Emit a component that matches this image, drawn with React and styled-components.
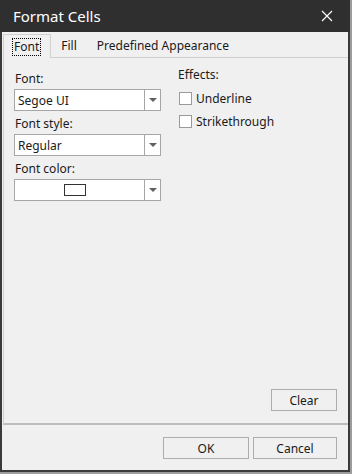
import React, { useState } from 'react';
import styled, { createGlobalStyle } from 'styled-components';

const GlobalStyle = createGlobalStyle`
  html, body {
    margin: 0;
    padding: 0;
    background: #9c9c9c;
  }
  * {
    box-sizing: border-box;
  }
`;

const Window = styled.div`
  width: 350px;
  height: 472px;
  background: #f0f0f0;
  border: 2px solid #3a3a3a;
  border-top: 0;
  display: flex;
  flex-direction: column;
  font-family: "Segoe UI", "Noto Sans", sans-serif;
  font-size: 12px;
  color: #1a1a1a;
`;

const TitleBar = styled.div`
  height: 32px;
  margin: 0 -2px;
  background: #2f2f2f;
  display: flex;
  align-items: center;
  justify-content: space-between;
  padding: 0 17px 0 13px;
  color: #ffffff;
  font-size: 15px;
`;

const CloseButton = styled.button`
  background: none;
  border: none;
  padding: 0;
  width: 12px;
  height: 12px;
  display: flex;
  cursor: pointer;
`;

const TabStrip = styled.div`
  display: flex;
  align-items: flex-end;
  height: 25px;
  padding-left: 1px;
`;

const Tab = styled.div`
  height: ${({ active }) => (active ? '24px' : '22px')};
  padding: 0 ${({ active }) => (active ? '10px 0 9px' : '9px')};
  display: flex;
  align-items: center;
  background: #f0f0f0;
  border: ${({ active }) => (active ? '1px solid #d0d0d0' : 'none')};
  border-bottom: none;
  margin-bottom: ${({ active }) => (active ? '-1px' : '0')};
  position: relative;
  z-index: 1;
  cursor: default;
`;

const TabLabel = styled.span`
  padding: 0 1px;
  line-height: 16px;
  outline: ${({ focused }) => (focused ? '1px dotted #000' : 'none')};
`;

const Panel = styled.div`
  flex: 1;
  margin-left: 1px;
  border-top: 1px solid #d0d0d0;
  border-left: 1px solid #d0d0d0;
  border-bottom: 2px solid #bcbcbc;
  display: flex;
  flex-direction: column;
  padding: 13px 11px 12px 10px;
`;

const Columns = styled.div`
  display: grid;
  grid-template-columns: 147px 1fr;
  column-gap: 17px;
  flex: 1;
  align-items: start;
`;

const Column = styled.div`
  display: flex;
  flex-direction: column;
  gap: 5px;
`;

const Field = styled.div`
  display: flex;
  flex-direction: column;
  gap: 2px;
`;

const Label = styled.div`
  line-height: 16px;
  padding-left: 1px;
`;

const Select = styled.div`
  height: 22px;
  background: #ffffff;
  border: 1px solid #a6a6a6;
  display: flex;
`;

const SelectValue = styled.div`
  flex: 1;
  display: flex;
  align-items: center;
  justify-content: ${({ center }) => (center ? 'center' : 'flex-start')};
  padding-left: 3px;
`;

const ArrowBox = styled.div`
  width: 16px;
  border-left: 1px solid #a6a6a6;
  display: flex;
  align-items: center;
  justify-content: center;
`;

const Arrow = styled.div`
  width: 0;
  height: 0;
  border-left: 4px solid transparent;
  border-right: 4px solid transparent;
  border-top: 4px solid #606060;
`;

const Swatch = styled.div`
  width: 22px;
  height: 12px;
  border: 1px solid #333333;
  background: ${({ color }) => color};
  margin-left: -12px;
`;

const Effects = styled.div`
  display: flex;
  flex-direction: column;
`;

const EffectsTitle = styled.div`
  line-height: 16px;
  margin-top: -4px;
  margin-bottom: 4px;
`;

const CheckRow = styled.label`
  display: flex;
  align-items: center;
  gap: 4px;
  height: 23px;
  padding-left: 1px;
  cursor: default;
`;

const CheckBox = styled.span`
  width: 13px;
  height: 13px;
  border: 1px solid #9a9a9a;
  background: #ffffff;
  display: inline-block;
`;

const PanelFooter = styled.div`
  display: flex;
  justify-content: flex-end;
`;

const Button = styled.button`
  width: ${({ width }) => width}px;
  height: 22px;
  background: #f0f0f0;
  border: 1px solid #adadad;
  font-family: inherit;
  font-size: 12px;
  color: #1a1a1a;
  padding: 0;
  cursor: pointer;
`;

const Footer = styled.div`
  height: 45px;
  display: flex;
  justify-content: flex-end;
  align-items: flex-start;
  gap: 4px;
  padding: 12px 11px 0 0;
`;

const tabs = ['Font', 'Fill', 'Predefined Appearance'];

const fields = [
  { label: 'Font:', value: 'Segoe UI' },
  { label: 'Font style:', value: 'Regular' },
  { label: 'Font color:', swatch: '#ffffff' },
];

const effects = ['Underline', 'Strikethrough'];

const App = () => {
  const [activeTab] = useState(0);

  return (
    <>
      <GlobalStyle />
      <Window>
        <TitleBar>
          <span>Format Cells</span>
          <CloseButton aria-label="Close">
            <svg width="12" height="12" viewBox="0 0 12 12">
              <path d="M1 1 L11 11 M11 1 L1 11" stroke="#ffffff" strokeWidth="1.2" />
            </svg>
          </CloseButton>
        </TitleBar>
        <TabStrip>
          {tabs.map((tab, index) => (
            <Tab key={tab} active={index === activeTab}>
              <TabLabel focused={index === activeTab}>{tab}</TabLabel>
            </Tab>
          ))}
        </TabStrip>
        <Panel>
          <Columns>
            <Column>
              {fields.map((field) => (
                <Field key={field.label}>
                  <Label>{field.label}</Label>
                  <Select>
                    <SelectValue center={!!field.swatch}>
                      {field.swatch ? <Swatch color={field.swatch} /> : field.value}
                    </SelectValue>
                    <ArrowBox>
                      <Arrow />
                    </ArrowBox>
                  </Select>
                </Field>
              ))}
            </Column>
            <Effects>
              <EffectsTitle>Effects:</EffectsTitle>
              {effects.map((effect) => (
                <CheckRow key={effect}>
                  <CheckBox />
                  {effect}
                </CheckRow>
              ))}
            </Effects>
          </Columns>
          <PanelFooter>
            <Button width={66}>Clear</Button>
          </PanelFooter>
        </Panel>
        <Footer>
          <Button width={86}>OK</Button>
          <Button width={84}>Cancel</Button>
        </Footer>
      </Window>
    </>
  );
};

export default App;
